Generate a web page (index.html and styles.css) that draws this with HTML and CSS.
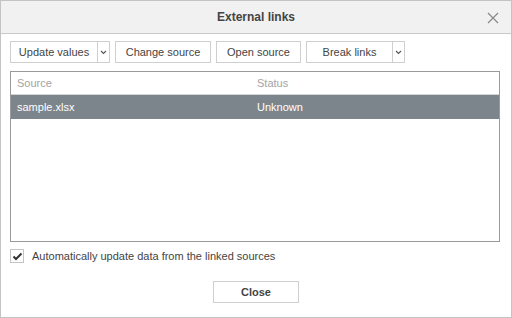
FILE: index.html
```html
<!DOCTYPE html>
<html lang="en">
<head>
    <meta charset="UTF-8">
    <title>External links</title>
    <link rel="stylesheet" href="styles.css">
</head>
<body>
<div class="dialog">
    <header class="dialog-header">
        <p class="title">External links</p>
        <span class="close-x">
            <svg width="12" height="12" viewBox="0 0 12 12"><path d="M1 1 L11 11 M11 1 L1 11" stroke="#888" stroke-width="1.2" fill="none"/></svg>
        </span>
    </header>
    <div class="dialog-body">
        <div class="toolbar">
            <div class="split">
                <button class="btn w-update">Update values</button>
                <button class="btn caret">
                    <svg width="7" height="5" viewBox="0 0 7 5"><path d="M1 1 L3.5 3.5 L6 1" stroke="#555" stroke-width="1.1" fill="none"/></svg>
                </button>
            </div>
            <button class="btn w-change">Change source</button>
            <button class="btn w-open">Open source</button>
            <div class="split">
                <button class="btn w-break">Break links</button>
                <button class="btn caret">
                    <svg width="7" height="5" viewBox="0 0 7 5"><path d="M1 1 L3.5 3.5 L6 1" stroke="#555" stroke-width="1.1" fill="none"/></svg>
                </button>
            </div>
        </div>
        <div class="grid">
            <div class="row head">
                <span>Source</span>
                <span>Status</span>
            </div>
            <div class="row selected">
                <span>sample.xlsx</span>
                <span>Unknown</span>
            </div>
        </div>
        <label class="check">
            <span class="box">
                <svg width="11" height="9" viewBox="0 0 11 9"><path d="M1.5 4.5 L4 7 L9.5 1.5" stroke="#333" stroke-width="2" fill="none"/></svg>
            </span>
            Automatically update data from the linked sources
        </label>
        <div class="footer">
            <button class="btn close">Close</button>
        </div>
    </div>
</div>
</body>
</html>
```

FILE: styles.css
```css
body {
    margin: 0;
    padding: 0;
    font-family: 'Liberation Sans', Arial, sans-serif;
    font-size: 11px;
    color: #444;
    background: white;
}
.dialog {
    box-sizing: border-box;
    width: 512px;
    height: 318px;
    border: 1px solid #c4c4c4;
    display: flex;
    flex-direction: column;
}
.dialog-header {
    height: 32px;
    background: #f1f1f1;
    border-bottom: 1px solid #c9c9c9;
    display: flex;
    justify-content: center;
    align-items: center;
    position: relative;
}
.title {
    margin: 0;
    font-size: 12px;
    font-weight: bold;
    color: #444;
}
.close-x {
    position: absolute;
    right: 12px;
    top: 11px;
    line-height: 0;
}
.dialog-body {
    padding: 7px 11px 0 9px;
    display: flex;
    flex-direction: column;
}
.toolbar {
    display: flex;
    gap: 5px;
}
.split {
    display: flex;
}
.btn {
    box-sizing: border-box;
    height: 22px;
    background: white;
    border: 1px solid #cfcfcf;
    font-family: inherit;
    font-size: 11px;
    color: #444;
    padding: 0;
    margin: 0;
}
.caret {
    width: 12px;
    border-left: none;
    display: flex;
    align-items: center;
    justify-content: center;
}
.caret svg {
    display: block;
}
.w-update {
    width: 88px;
}
.w-change {
    width: 96px;
}
.w-open {
    width: 85px;
}
.w-break {
    width: 87px;
}
.grid {
    margin-top: 8px;
    height: 171px;
    width: 490px;
    box-sizing: border-box;
    border: 1px solid #9a9a9a;
}
.row {
    display: grid;
    grid-template-columns: 240px 1fr;
    align-items: center;
    padding-left: 6px;
}
.row.head {
    height: 22px;
    color: #a3a3a3;
    border-bottom: 1px solid #d4d4d4;
}
.row.selected {
    height: 24px;
    background: #7d858c;
    color: white;
}
.check {
    margin-top: 7px;
    display: flex;
    align-items: center;
    gap: 8px;
    height: 14px;
    color: #444;
}
.box {
    box-sizing: border-box;
    width: 14px;
    height: 14px;
    border: 1px solid #c4c4c4;
    display: flex;
    align-items: center;
    justify-content: center;
}
.footer {
    display: flex;
    justify-content: center;
    margin-top: 18px;
    padding-left: 2px;
}
.close {
    width: 86px;
    font-weight: bold;
}
```
